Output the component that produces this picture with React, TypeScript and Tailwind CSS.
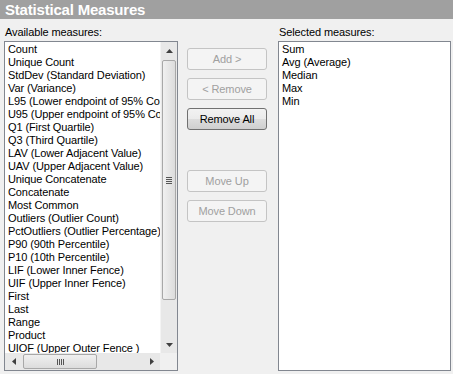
import React from "react";

const available = [
  "Count",
  "Unique Count",
  "StdDev (Standard Deviation)",
  "Var (Variance)",
  "L95 (Lower endpoint of 95% Confidence Interval)",
  "U95 (Upper endpoint of 95% Confidence Interval)",
  "Q1 (First Quartile)",
  "Q3 (Third Quartile)",
  "LAV (Lower Adjacent Value)",
  "UAV (Upper Adjacent Value)",
  "Unique Concatenate",
  "Concatenate",
  "Most Common",
  "Outliers (Outlier Count)",
  "PctOutliers (Outlier Percentage)",
  "P90 (90th Percentile)",
  "P10 (10th Percentile)",
  "LIF (Lower Inner Fence)",
  "UIF (Upper Inner Fence)",
  "First",
  "Last",
  "Range",
  "Product",
  "UIOF (Upper Outer Fence )",
];

const selected = ["Sum", "Avg (Average)", "Median", "Max", "Min"];

function Btn({ label, enabled }: { label: string; enabled?: boolean }) {
  return (
    <div
      className={
        enabled
          ? "w-[80px] h-[22px] flex items-center justify-center rounded-[3px] border border-[#707070] bg-[linear-gradient(#f2f2f2_0%,#ebebeb_50%,#dddddd_51%,#cfcfcf_100%)] text-black whitespace-nowrap"
          : "w-[80px] h-[22px] flex items-center justify-center rounded-[3px] border border-[#c4c4c4] bg-[#f4f4f4] text-[#a0a0a0] whitespace-nowrap"
      }
    >
      {label}
    </div>
  );
}

function UpArrow() {
  return (
    <svg width="7" height="4" viewBox="0 0 7 4">
      <path d="M3.5 0 L7 4 L0 4 Z" fill="#404040" />
    </svg>
  );
}

function DownArrow() {
  return (
    <svg width="7" height="4" viewBox="0 0 7 4">
      <path d="M0 0 L7 0 L3.5 4 Z" fill="#404040" />
    </svg>
  );
}

export default function App() {
  return (
    <div
      className="w-[453px] h-[374px] bg-[#f0f0f0] flex flex-col overflow-hidden text-[11px] leading-[13px] tracking-[-0.1px]"
      style={{ fontFamily: "Tahoma, 'Liberation Sans', Arial, sans-serif" }}
    >
      {/* Title bar */}
      <div className="h-[19px] shrink-0 bg-[#a0a0a0] px-[5px] flex items-center text-white font-bold text-[15px] tracking-[-0.2px]">
        Statistical Measures
      </div>

      <div className="flex flex-1 min-h-0 pl-[4px] pr-[2px] pt-[7px] pb-[3px]">
        {/* Available */}
        <div className="flex flex-col w-[174px] min-h-0">
          <div className="pl-[1px] h-[15px] shrink-0">Available measures:</div>
          <div className="flex-1 min-h-0 border border-[#828790] bg-white flex flex-col overflow-hidden">
            <div className="flex flex-1 min-h-0">
              <div className="flex-1 overflow-hidden pl-[3px] pt-[1px] whitespace-nowrap">
                {available.map((m) => (
                  <div key={m} className="h-[13px]">{m}</div>
                ))}
              </div>
              {/* vertical scrollbar */}
              <div className="w-[17px] bg-[#e8e8e8] border-l border-[#f4f4f4] flex flex-col">
                <div className="h-[18px] flex items-center justify-center"><UpArrow /></div>
                <div className="h-[240px] mx-[1px] rounded-[2px] border border-[#a8a8a8] bg-[linear-gradient(90deg,#f0f0f0,#dcdcdc)] flex items-center justify-center">
                  <div className="flex flex-col gap-[1px]">
                    <div className="w-[6px] h-[1px] bg-[#555]" />
                    <div className="w-[6px] h-[1px] bg-[#555]" />
                    <div className="w-[6px] h-[1px] bg-[#555]" />
                    <div className="w-[6px] h-[1px] bg-[#555]" />
                  </div>
                </div>
                <div className="flex-1" />
                <div className="h-[17px] flex items-center justify-center"><DownArrow /></div>
              </div>
            </div>
            {/* horizontal scrollbar */}
            <div className="h-[17px] shrink-0 flex bg-[#e8e8e8]">
              <div className="flex-1 flex items-center">
                <div className="w-[17px] flex items-center justify-center">
                  <svg width="4" height="7" viewBox="0 0 4 7"><path d="M4 0 L4 7 L0 3.5 Z" fill="#404040" /></svg>
                </div>
                <div className="w-[74px] h-[15px] ml-[1px] rounded-[2px] border border-[#a8a8a8] bg-[linear-gradient(#f0f0f0,#dcdcdc)] flex items-center justify-center gap-[1px]">
                  <div className="w-[1px] h-[6px] bg-[#555]" />
                  <div className="w-[1px] h-[6px] bg-[#555]" />
                  <div className="w-[1px] h-[6px] bg-[#555]" />
                  <div className="w-[1px] h-[6px] bg-[#555]" />
                </div>
                <div className="flex-1" />
                <div className="w-[17px] flex items-center justify-center">
                  <svg width="4" height="7" viewBox="0 0 4 7"><path d="M0 0 L4 3.5 L0 7 Z" fill="#404040" /></svg>
                </div>
              </div>
              <div className="w-[17px] bg-[#f0f0f0]" />
            </div>
          </div>
        </div>

        {/* Buttons */}
        <div className="w-[100px] pl-[9px] pt-[22px] flex flex-col">
          <div className="flex flex-col gap-[8px]">
            <Btn label="Add >" />
            <Btn label="< Remove" />
            <Btn label="Remove All" enabled />
          </div>
          <div className="flex flex-col gap-[8px] mt-[40px]">
            <Btn label="Move Up" />
            <Btn label="Move Down" />
          </div>
        </div>

        {/* Selected */}
        <div className="flex flex-col flex-1 min-h-0">
          <div className="pl-[1px] h-[15px] shrink-0">Selected measures:</div>
          <div className="flex-1 min-h-0 border border-[#828790] bg-white pl-[3px] pt-[1px]">
            {selected.map((m) => (
              <div key={m} className="h-[13px]">{m}</div>
            ))}
          </div>
        </div>
      </div>
    </div>
  );
}
